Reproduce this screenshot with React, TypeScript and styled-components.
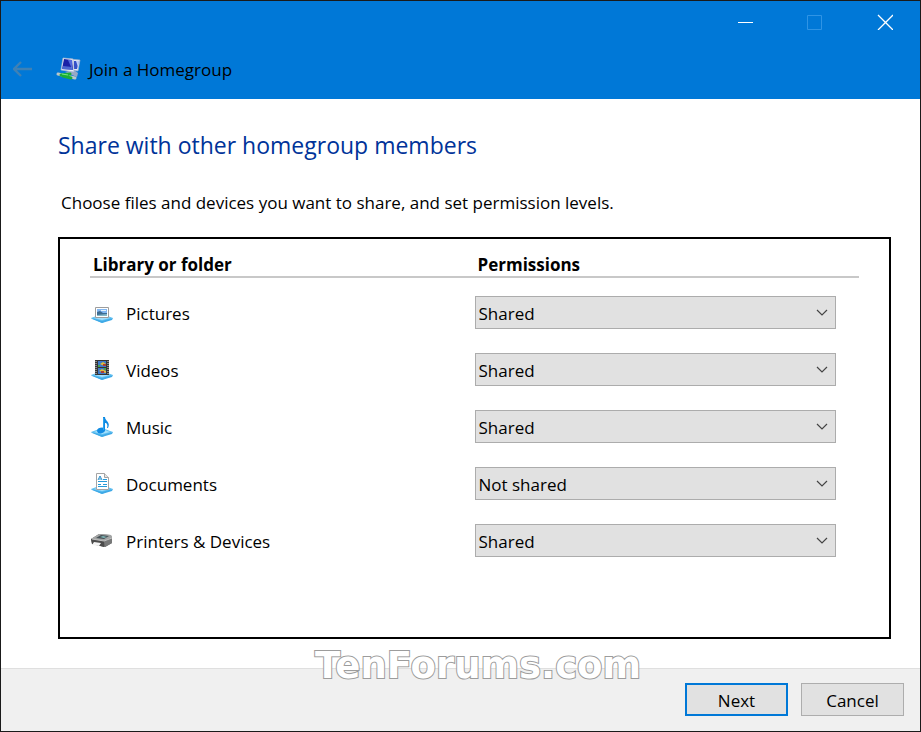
import React from "react";
import styled, { createGlobalStyle } from "styled-components";

const GlobalStyle = createGlobalStyle`
  *, *::before, *::after { box-sizing: border-box; }
  body {
    margin: 0;
    background: #fff;
    color: #000;
    font-family: "Open Sans", "Noto Sans", sans-serif;
    font-size: 17px;
    line-height: 24px;
  }
`;

const Window = styled.main`
  display: grid;
  grid-template-rows: auto 1fr auto;
  min-height: 100vh;
  border: 1px solid #1a1a1a;
`;

const TitleBar = styled.header`
  background: #0078d7;
  padding-bottom: 4px;
`;

const CaptionRow = styled.div`
  display: flex;
  justify-content: flex-end;
  height: 42px;
`;

const CaptionButton = styled.button`
  display: grid;
  place-items: center;
  width: 70px;
  padding: 0;
  border: 0;
  background: transparent;
`;

const TitleRow = styled.div`
  display: flex;
  align-items: center;
  height: 52px;
  padding-left: 11px;
`;

const BackButton = styled.button`
  display: grid;
  place-items: center;
  width: 22px;
  height: 24px;
  margin-right: 22px;
  padding: 0;
  border: 0;
  background: transparent;
`;

const WindowTitle = styled.span`
  padding: 2px 0 0 8px;
`;

const Content = styled.section`
  display: flex;
  flex-direction: column;
  padding: 30px 29px 29px 57px;
`;

const Heading = styled.h1`
  margin: 0;
  color: #003399;
  font-size: 23px;
  font-weight: 400;
  line-height: 32px;
`;

const Intro = styled.p`
  margin: 30px 0 22px;
  padding-left: 3px;
`;

const Panel = styled.div`
  flex: 1;
  padding: 13px 30px 24px;
  border: 2px solid #000;
`;

const ShareTable = styled.table`
  width: 100%;
  border-collapse: separate;
  border-spacing: 0;
  table-layout: fixed;
`;

const HeadCell = styled.th`
  width: 50%;
  height: 26px;
  padding: 1px 3px 0;
  border-bottom: 2px solid #c8c8c8;
  font-weight: 700;
  line-height: 23px;
  text-align: left;
  vertical-align: bottom;
`;

const TableBody = styled.tbody`
  &::before {
    content: "";
    display: block;
    height: 6px;
  }
`;

const Cell = styled.td`
  height: 57px;
  padding: 0;
  vertical-align: middle;
`;

const LibraryLabel = styled.label`
  display: flex;
  align-items: center;
  gap: 13px;
  padding-left: 1px;
`;

const LibraryName = styled.span`
  padding-top: 2px;
`;

const SelectWrap = styled.div`
  display: grid;
  align-items: center;
  margin-right: 23px;
  & > * { grid-area: 1 / 1; }
  & > svg {
    justify-self: end;
    margin-right: 8px;
    pointer-events: none;
  }
`;

const Select = styled.select`
  appearance: none;
  width: 100%;
  height: 33px;
  padding: 2px 28px 0 3px;
  border: 1px solid #acacac;
  border-radius: 0;
  background: #e1e1e1;
  color: #000;
  font: inherit;
`;

const Footer = styled.footer`
  position: relative;
  display: flex;
  justify-content: flex-end;
  gap: 13px;
  padding: 14px 16px 15px;
  border-top: 1px solid #dfdfdf;
  background: #f0f0f0;
`;

const ActionButton = styled.button<{ $primary?: boolean }>`
  width: 103px;
  height: 33px;
  padding: 2px 0 0;
  border: ${(p) => (p.$primary ? "2px solid #0078d7" : "1px solid #adadad")};
  background: #e1e1e1;
  color: #000;
  font: inherit;
`;

const Watermark = styled.span`
  position: absolute;
  top: -25px;
  left: 314px;
  color: #fff;
  font-family: "DejaVu Sans", sans-serif;
  font-size: 37px;
  font-weight: 700;
  line-height: 44px;
  -webkit-text-stroke: 2px #9c9c9c;
  paint-order: stroke fill;
  pointer-events: none;
`;

const NetworkIcon = () => (
  <svg width="25" height="24" viewBox="0 0 25 24" aria-hidden="true">
    <path d="M14 2 24 3 22 14 14 13Z" fill="#dfe6f5" stroke="#9baccd" strokeWidth=".7" />
    <path d="M18 4 23 4 21 12 18 12Z" fill="#3650c7" />
    <path d="m20 4 3 0-1 6Z" fill="#b9cbfa" />
    <path d="m9 15 9-2 4 3-1 4-5-2Z" fill="#99a8c5" />
    <path d="m7 1 10 1 1 13L5 13Z" fill="#e8edf8" stroke="#a6b4d0" strokeWidth=".7" />
    <path d="m8 2 8 1 1 10L6 12Z" fill="#1a22a7" />
    <path d="m12 3 4 0 0 9Z" fill="#5268dd" />
    <path d="m7 9 9 1 1 3-11-1Z" fill="#6c96ed" opacity=".6" />
    <path d="m2 17 17 4" stroke="#bbc6c9" strokeWidth="3" strokeLinecap="round" />
    <path d="m5 18 9-1M7 19l8 2" stroke="#19ae38" strokeWidth="3" strokeLinecap="round" />
    <path d="m6 17 6 1" stroke="#79eb80" strokeWidth="1" />
  </svg>
);

const Tray = () => (
  <>
    <path d="m0 17 11-4 11 4-11 5Z" fill="#5fc0f2" />
    <path d="m0 17 11 3 11-3-1 2-10 3L1 18Z" fill="#3fa9e6" />
    <path d="m3 17 8-3 8 3-8 2Z" fill="#a4dffb" />
  </>
);

const PicturesIcon = () => (
  <svg width="22" height="24" viewBox="0 0 22 24" aria-hidden="true">
    <Tray />
    <path d="M4.500 6.500H17.500V16.500H4.500Z" fill="#fff" stroke="#9d9d9d" />
    <path d="M6 8H16V15H6Z" fill="#82b7f2" />
    <path d="m6 11 3-1 3 2 4 0V15H6Z" fill="#3d6b91" />
    <path d="M6 14 16 13V15H6Z" fill="#83b9ca" />
    <path d="M10 9h5v1h-5Z" fill="#e6f3fb" />
  </svg>
);

const VideosIcon = () => (
  <svg width="22" height="24" viewBox="0 0 22 24" aria-hidden="true">
    <Tray />
    <path d="M4 2H18V17H4Z" fill="#353535" />
    <path d="M5 3V17M17 3V17" stroke="#ddd" strokeDasharray="1 1" />
    <path d="M7 3H15V9H7ZM7 10H15V16H7Z" fill="#3d79c9" />
    <path d="m9 6 3-2 3 2v2l-4-1ZM8 13l3-2 4 2v2l-4-1Z" fill="#dfba38" />
    <path d="M12 6h3v2h-3ZM10 13h3v2h-3Z" fill="#aa3d37" />
    <path d="M7 7h2v2H7ZM13 10h2v2h-2Z" fill="#44a64d" />
  </svg>
);

const MusicIcon = () => (
  <svg width="22" height="24" viewBox="0 0 22 24" aria-hidden="true">
    <Tray />
    <ellipse cx="10" cy="15.500" rx="4" ry="2.800" fill="#118be3" transform="rotate(-15 10 15.500)" />
    <path d="M12 2h2c0 4 6 5 3 11h-1c1-3 0-5-2-5v8h-2Z" fill="#118be3" />
    <path d="M12.500 3v12" stroke="#2ca5f1" />
  </svg>
);

const DocumentsIcon = () => (
  <svg width="22" height="24" viewBox="0 0 22 24" aria-hidden="true">
    <Tray />
    <path d="M5.500 1.500H13.500L17.500 5.500V17.500H5.500Z" fill="#fff" stroke="#a4a4a4" />
    <path d="M13.500 1.500v4h4" fill="#e3e3e3" stroke="#a4a4a4" />
    <path d="m7 8 2-4 2 4M8 7h2" fill="none" stroke="#268dca" />
    <path d="M12 7.500h4M7 9.500h9M7 12.500h3m2 0h4M7 14.500h9" stroke="#259bda" />
  </svg>
);

const PrinterIcon = () => (
  <svg width="22" height="24" viewBox="0 0 22 24" aria-hidden="true">
    <path d="M0 10 8 5 20 6 21 9V14L14 18 1 15Z" fill="#606161" />
    <path d="M0 10 8 5 20 6 21 9 13 12Z" fill="#a2a4a4" />
    <path d="M5 9 10 6 18 7 13 10Z" fill="#465156" />
    <path d="m9 8 3-1 4 1-3 1Z" fill="#7fb6b6" />
    <path d="M0 10 13 12V18L1 15Z" fill="#4b4b4b" />
    <path d="M13 12 21 9V14L14 18Z" fill="#777878" />
    <path d="m3 13 7 1-2 3-7-1Z" fill="#f4f4f4" />
    <path d="m1 10 12 2 8-3" fill="none" stroke="#c1c1c1" />
  </svg>
);

const Chevron = () => (
  <svg width="12" height="8" viewBox="0 0 12 8" aria-hidden="true">
    <path d="m1 1 5 5 5-5" fill="none" stroke="#444" strokeWidth="1.200" />
  </svg>
);

const libraries = [
  { id: "pictures", name: "Pictures", Icon: PicturesIcon, value: "Shared" },
  { id: "videos", name: "Videos", Icon: VideosIcon, value: "Shared" },
  { id: "music", name: "Music", Icon: MusicIcon, value: "Shared" },
  { id: "documents", name: "Documents", Icon: DocumentsIcon, value: "Not shared" },
  { id: "printers", name: "Printers & Devices", Icon: PrinterIcon, value: "Shared" },
];

export default function App() {
  return (
    <>
      <GlobalStyle />
      <Window>
        <TitleBar>
          <CaptionRow>
            <CaptionButton type="button" aria-label="Minimize">
              <svg width="16" height="16" aria-hidden="true">
                <path d="M1 8.500H16" stroke="#fff" />
              </svg>
            </CaptionButton>
            <CaptionButton type="button" aria-label="Maximize" disabled>
              <svg width="16" height="16" aria-hidden="true">
                <path d="M.5 1.500H14.500V15.500H.5Z" fill="none" stroke="#2f94e5" />
              </svg>
            </CaptionButton>
            <CaptionButton type="button" aria-label="Close">
              <svg width="16" height="16" aria-hidden="true">
                <path d="m1 1 15 15M16 1 1 16" stroke="#fff" strokeWidth="1.300" />
              </svg>
            </CaptionButton>
          </CaptionRow>
          <TitleRow>
            <BackButton type="button" aria-label="Back" disabled>
              <svg width="20" height="16" viewBox="0 0 20 16" aria-hidden="true">
                <path d="M19 8H1M8 1 1 8l7 7" fill="none" stroke="#3f81b5" strokeWidth="2.400" />
              </svg>
            </BackButton>
            <NetworkIcon />
            <WindowTitle>Join a Homegroup</WindowTitle>
          </TitleRow>
        </TitleBar>
        <Content>
          <Heading>Share with other homegroup members</Heading>
          <Intro>Choose files and devices you want to share, and set permission levels.</Intro>
          <Panel>
            <ShareTable>
              <thead>
                <tr>
                  <HeadCell scope="col">Library or folder</HeadCell>
                  <HeadCell scope="col">Permissions</HeadCell>
                </tr>
              </thead>
              <TableBody>
                {libraries.map(({ id, name, Icon, value }) => (
                  <tr key={id}>
                    <Cell>
                      <LibraryLabel htmlFor={id}>
                        <Icon />
                        <LibraryName>{name}</LibraryName>
                      </LibraryLabel>
                    </Cell>
                    <Cell>
                      <SelectWrap>
                        <Select id={id} defaultValue={value}>
                          <option>Shared</option>
                          <option>Not shared</option>
                        </Select>
                        <Chevron />
                      </SelectWrap>
                    </Cell>
                  </tr>
                ))}
              </TableBody>
            </ShareTable>
          </Panel>
        </Content>
        <Footer>
          <Watermark>TenForums.com</Watermark>
          <ActionButton type="button" $primary>Next</ActionButton>
          <ActionButton type="button">Cancel</ActionButton>
        </Footer>
      </Window>
    </>
  );
}
